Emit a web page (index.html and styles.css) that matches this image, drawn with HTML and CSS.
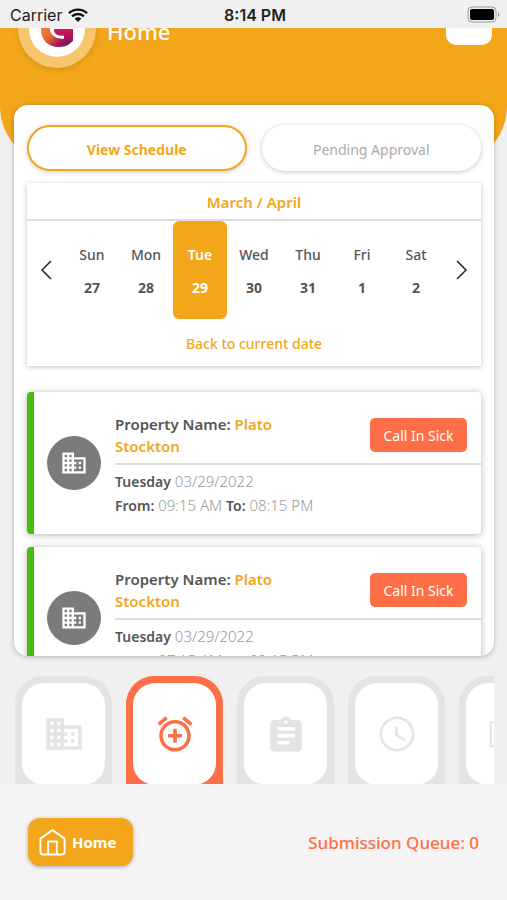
FILE: index.html
```html
<!DOCTYPE html>
<html lang="en">
<head>
<meta charset="utf-8">
<meta name="viewport" content="width=device-width, initial-scale=1">
<title>Home</title>
<link rel="stylesheet" href="styles.css">
</head>
<body>
<svg class="defs" aria-hidden="true">
  <symbol id="building" viewBox="0 0 24 24"><path d="M12 7V3H2v18h20V7H12zM6 19H4v-2h2v2zm0-4H4v-2h2v2zm0-4H4V9h2v2zm0-4H4V5h2v2zm4 12H8v-2h2v2zm0-4H8v-2h2v2zm0-4H8V9h2v2zm0-4H8V5h2v2zm10 12h-8v-2h2v-2h-2v-2h2v-2h-2V9h8v10zm-2-8h-2v2h2v-2zm0 4h-2v2h2v-2z"/></symbol>
</svg>

<div class="status">
  <div class="status-left">
    <span>Carrier</span>
    <svg class="wifi" viewBox="0 0 20 14" aria-hidden="true">
      <path d="M1 5.2a13 13 0 0 1 18 0M4.1 8.4a8.4 8.4 0 0 1 11.8 0" fill="none" stroke="#111" stroke-width="2.4"/>
      <path d="M10 14l-3.4-3.4a4.9 4.9 0 0 1 6.8 0z" fill="#111"/>
    </svg>
  </div>
  <time class="status-time">8:14 PM</time>
  <svg class="battery" viewBox="0 0 33 17" aria-hidden="true">
    <rect x="1" y="1" width="28" height="15" rx="4" fill="none" stroke="#999" stroke-width="1"/>
    <rect x="3" y="3" width="24" height="11" rx="2" fill="#000"/>
    <path d="M31 6a3 3 0 0 1 0 5z" fill="#999"/>
  </svg>
</div>

<div class="app">
  <header class="hero">
    <div class="avatar">
      <svg viewBox="0 0 56 56" aria-hidden="true">
        <defs>
          <linearGradient id="warm" x1="0" y1="0" x2="1" y2="1">
            <stop offset="0" stop-color="#f9a13a"/><stop offset=".5" stop-color="#e9622f"/><stop offset=".72" stop-color="#a3195b"/><stop offset="1" stop-color="#5e1a5e"/>
          </linearGradient>
          <linearGradient id="berry" x1="0" y1="0" x2="0" y2="1">
            <stop offset="0" stop-color="#d4145a"/><stop offset="1" stop-color="#7a1560"/>
          </linearGradient>
        </defs>
        <circle cx="28" cy="28" r="28" fill="#fff"/>
        <path d="M34 12C20 10 12 18 12 28c0 11 7 18 18 18 9 0 14-5 14-10H31c-7 0-10-4-10-9 0-7 5-13 13-15z" fill="url(#warm)"/>
        <path d="M25 28h19v12c-3 3-8 4-12 2 4-1 6-3 6-6h-4c-6 0-9-3-9-8z" fill="url(#berry)"/>
        <path d="M22 25c0 8 5 12 13 11" fill="none" stroke="#fff" stroke-width="3"/>
      </svg>
    </div>
    <h1>Home</h1>
    <button class="menu" type="button" aria-label="Menu"></button>
  </header>

  <main class="panel">
    <div class="tabs">
      <button class="tab active" type="button">View Schedule</button>
      <button class="tab" type="button">Pending Approval</button>
    </div>

    <section class="calendar">
      <h2>March / April</h2>
      <div class="week">
        <button class="arrow" type="button" aria-label="Previous week"><svg viewBox="0 0 12 20"><path d="M11 1L2 10l9 9"/></svg></button>
        <div class="days">
          <button class="day" type="button"><span>Sun</span><b>27</b></button>
          <button class="day" type="button"><span>Mon</span><b>28</b></button>
          <button class="day selected" type="button"><span>Tue</span><b>29</b></button>
          <button class="day" type="button"><span>Wed</span><b>30</b></button>
          <button class="day" type="button"><span>Thu</span><b>31</b></button>
          <button class="day" type="button"><span>Fri</span><b>1</b></button>
          <button class="day" type="button"><span>Sat</span><b>2</b></button>
        </div>
        <button class="arrow" type="button" aria-label="Next week"><svg viewBox="0 0 12 20"><path d="M1 1l9 9-9 9"/></svg></button>
      </div>
      <a class="back" href="#">Back to current date</a>
    </section>

    <div class="shifts">
      <article class="shift">
        <div class="badge"><svg viewBox="0 0 24 24" aria-hidden="true"><use href="#building"/></svg></div>
        <div class="info">
          <div class="top">
            <p class="property">Property Name: <em>Plato Stockton</em></p>
            <button class="sick" type="button">Call In Sick</button>
          </div>
          <div class="when">
            <p><strong>Tuesday</strong> 03/29/2022</p>
            <p><strong>From:</strong> 09:15 AM <strong>To:</strong> 08:15 PM</p>
          </div>
        </div>
      </article>
      <article class="shift">
        <div class="badge"><svg viewBox="0 0 24 24" aria-hidden="true"><use href="#building"/></svg></div>
        <div class="info">
          <div class="top">
            <p class="property">Property Name: <em>Plato Stockton</em></p>
            <button class="sick" type="button">Call In Sick</button>
          </div>
          <div class="when">
            <p><strong>Tuesday</strong> 03/29/2022</p>
            <p><strong>From:</strong> 07:15 AM <strong>To:</strong> 09:15 PM</p>
          </div>
        </div>
      </article>
    </div>
  </main>

  <nav class="tiles" aria-label="Sections">
    <button class="tile" type="button" aria-label="Properties"><span><svg viewBox="0 0 24 24"><use href="#building"/></svg></span></button>
    <button class="tile on" type="button" aria-label="Schedule"><span><svg viewBox="0 0 24 24"><path d="M7.88 3.39L6.6 1.86 2 5.71l1.29 1.53 4.59-3.85zM22 5.72l-4.6-3.86-1.29 1.53 4.6 3.86L22 5.72zM12 4c-4.97 0-9 4.03-9 9s4.02 9 9 9c4.97 0 9-4.03 9-9s-4.03-9-9-9zm0 16c-3.87 0-7-3.13-7-7s3.13-7 7-7 7 3.13 7 7-3.13 7-7 7zm1-11h-2v3H8v2h3v3h2v-3h3v-2h-3V9z"/></svg></span></button>
    <button class="tile" type="button" aria-label="Assignments"><span><svg viewBox="0 -1 24 24"><path d="M19 3h-4.18C14.4 1.84 13.3 1 12 1c-1.3 0-2.4.84-2.82 2H5c-1.1 0-2 .9-2 2v14c0 1.1.9 2 2 2h14c1.1 0 2-.9 2-2V5c0-1.1-.9-2-2-2zm-7 0c.55 0 1 .45 1 1s-.45 1-1 1-1-.45-1-1 .45-1 1-1zm2 14H7v-2h7v2zm3-4H7v-2h10v2zm0-4H7V7h10v2z"/></svg></span></button>
    <button class="tile" type="button" aria-label="Time"><span><svg viewBox="0 0 24 24"><path d="M11.99 2C6.47 2 2 6.48 2 12s4.47 10 9.99 10C17.52 22 22 17.52 22 12S17.52 2 11.99 2zM12 20.500c-4.700 0-8.500-3.800-8.500-8.500S7.300 3.500 12 3.500s8.500 3.800 8.500 8.500-3.800 8.500-8.500 8.500zm.5-13H11v5.500l5.250 3.150.75-1.230-4.500-2.670z"/></svg></span></button>
    <button class="tile" type="button" aria-label="More"><span><svg viewBox="0 0 24 24"><path d="M1.500 4.500h21v15h-21zM2.700 5.700v12.600h18.600V5.700z" fill-rule="evenodd"/></svg></span></button>
  </nav>
</div>

<footer class="footer">
  <a class="home" href="#">
    <svg viewBox="0 0 28 28" aria-hidden="true"><path d="M1.500 10.500L14 1.500l12.500 9V24q0 3-3 3h-19q-3 0-3-3zM9.500 27V13.500h9V27"/></svg>
    <span>Home</span>
  </a>
  <p class="queue">Submission Queue: 0</p>
</footer>
</body>
</html>
```
FILE: styles.css
```css
:root {
  --orange: #f3a61a;
  --coral: #ff6f47;
  --ink: #555;
  --muted: #aaa;
}
* { box-sizing: border-box; }
body {
  margin: 0;
  height: 100vh;
  display: flex;
  flex-direction: column;
  overflow: hidden;
  background: #f0f0f0;
  color: var(--ink);
  font-family: "Noto Sans", "Open Sans", sans-serif;
  font-size: 14px;
}
button { font: inherit; color: inherit; border: 0; padding: 0; background: none; }
a { text-decoration: none; }
h1, h2, p { margin: 0; }
svg { display: block; fill: currentColor; }
.defs { display: none; }

.status {
  flex: none;
  height: 28px;
  padding: 1px 7px 0 10px;
  display: grid;
  grid-template-columns: 1fr auto 1fr;
  align-items: center;
  font-family: Inter, "Liberation Sans", sans-serif;
  font-size: 16px;
  color: #222;
}
.status-left { display: flex; align-items: center; gap: 6px; }
.wifi { width: 20px; height: 14px; }
.status-time { font-weight: 600; }
.battery { width: 33px; height: 17px; justify-self: end; }

.app {
  flex: 1;
  min-height: 0;
  display: flex;
  flex-direction: column;
  overflow: hidden;
}
.hero {
  flex: none;
  height: 138px;
  display: flex;
  align-items: flex-start;
  padding: 0 15px 0 18px;
  background: var(--orange);
  border-radius: 0 0 60px 60px;
}
.avatar {
  width: 78px;
  height: 78px;
  margin-top: -38px;
  padding: 11px;
  border-radius: 50%;
  background: #f9c56c;
  box-shadow: 0 2px 6px rgba(0, 0, 0, .12);
}
.hero h1 {
  flex: 1;
  margin: -13px 0 0 11px;
  font-size: 22px;
  line-height: 32px;
  font-weight: 500;
  color: #fff;
}
.menu {
  width: 46px;
  height: 46px;
  margin-top: -29px;
  border-radius: 10px;
  background: #fff;
}

.panel {
  position: relative;
  flex: 1;
  min-height: 0;
  margin: -61px 13px 0 14px;
  padding: 20px 13px 0;
  overflow: hidden;
  border-radius: 14px;
  background: #fff;
  box-shadow: 0 1px 5px rgba(0, 0, 0, .25);
}
.tabs { display: grid; grid-template-columns: 1fr 1fr; gap: 15px; }
.tab {
  height: 46px;
  padding-top: 2px;
  border-radius: 23px;
  color: var(--muted);
  background: #fff;
  box-shadow: 0 1px 5px rgba(0, 0, 0, .22);
}
.tab.active {
  border: 2px solid var(--orange);
  color: var(--orange);
  font-weight: 700;
}

.calendar {
  margin-top: 12px;
  height: 183px;
  background: #fff;
  box-shadow: 0 1px 5px rgba(0, 0, 0, .25);
  text-align: center;
}
.calendar h2 {
  height: 38px;
  border-bottom: 2px solid #ddd;
  font-size: 15px;
  line-height: 38px;
  font-weight: 600;
  color: var(--orange);
}
.week { display: flex; }
.arrow { width: 38px; display: flex; align-items: center; justify-content: center; }
.arrow svg { width: 12px; height: 20px; fill: none; stroke: #222; stroke-width: 1.5; }
.days { flex: 1; display: grid; grid-template-columns: repeat(7, 1fr); }
.day {
  height: 98px;
  padding-top: 2px;
  display: flex;
  flex-direction: column;
  align-items: center;
  justify-content: center;
  gap: 13px;
  border-radius: 6px;
  line-height: 20px;
}
.day span { font-weight: 500; }
.day b { font-weight: 700; }
.day.selected { background: var(--orange); color: #fff; }
.day.selected span { font-weight: 600; }
.back {
  display: block;
  margin-top: 15px;
  line-height: 20px;
  font-weight: 500;
  color: var(--orange);
}

.shifts { margin-top: 26px; display: flex; flex-direction: column; gap: 13px; }
.shift {
  height: 142px;
  display: flex;
  align-items: center;
  border-left: 7px solid #48be0c;
  border-radius: 4px;
  background: #fff;
  box-shadow: 0 1px 7px rgba(0, 0, 0, .3);
}
.badge {
  flex: none;
  width: 54px;
  height: 54px;
  margin: 0 14px 0 13px;
  border-radius: 50%;
  display: grid;
  place-items: center;
  background: #7b7b7b;
  color: #fff;
}
.badge svg { width: 28px; height: 28px; }
.info { flex: 1; align-self: stretch; }
.top {
  height: 73px;
  padding: 14px 14px 0 0;
  display: flex;
  align-items: center;
  justify-content: space-between;
  border-bottom: 2px solid #ddd;
}
.property { width: 190px; padding-top: 1px; font-size: 15px; line-height: 22px; font-weight: 600; }
.property em { font-style: normal; color: var(--orange); }
.sick {
  width: 97px;
  height: 34px;
  padding-top: 1px;
  border-radius: 5px;
  background: var(--coral);
  color: #fff;
}
.when { padding-top: 4px; font-size: 15px; line-height: 24px; font-weight: 300; color: #999; }
.when strong { font-size: 14px; line-height: 16px; font-weight: 600; color: var(--ink); }

.tiles {
  flex: none;
  height: 128px;
  margin: 0 13px 0 15px;
  padding-top: 20px;
  display: flex;
  gap: 14px;
  overflow: hidden;
}
.tile {
  flex: none;
  width: 97px;
  height: 130px;
  padding: 7px;
  border-radius: 28px 28px 0 0;
  background: #e4e4e4;
  color: #e4e4e4;
  display: flex;
  align-items: flex-start;
}
.tile span {
  flex: 1;
  height: 102px;
  display: grid;
  place-items: center;
  border-radius: 22px;
  background: #fff;
}
.tile svg { width: 42px; height: 42px; }
.tile.on { background: var(--coral); color: var(--coral); }

.footer {
  flex: none;
  height: 116px;
  padding: 0 28px;
  display: flex;
  align-items: center;
  justify-content: space-between;
  background: #f5f3f4;
}
.home {
  height: 48px;
  width: 105px;
  padding: 0 11px;
  display: flex;
  align-items: center;
  gap: 6px;
  border-radius: 12px;
  background: var(--orange);
  color: #fff;
  font-size: 15px;
  font-weight: 700;
  box-shadow: 0 1px 4px rgba(0, 0, 0, .3);
}
.home svg { width: 27px; height: 28px; fill: none; stroke: #fff; stroke-width: 2; stroke-linejoin: round; }
.queue { font-size: 17px; font-weight: 500; color: var(--coral); }
```
